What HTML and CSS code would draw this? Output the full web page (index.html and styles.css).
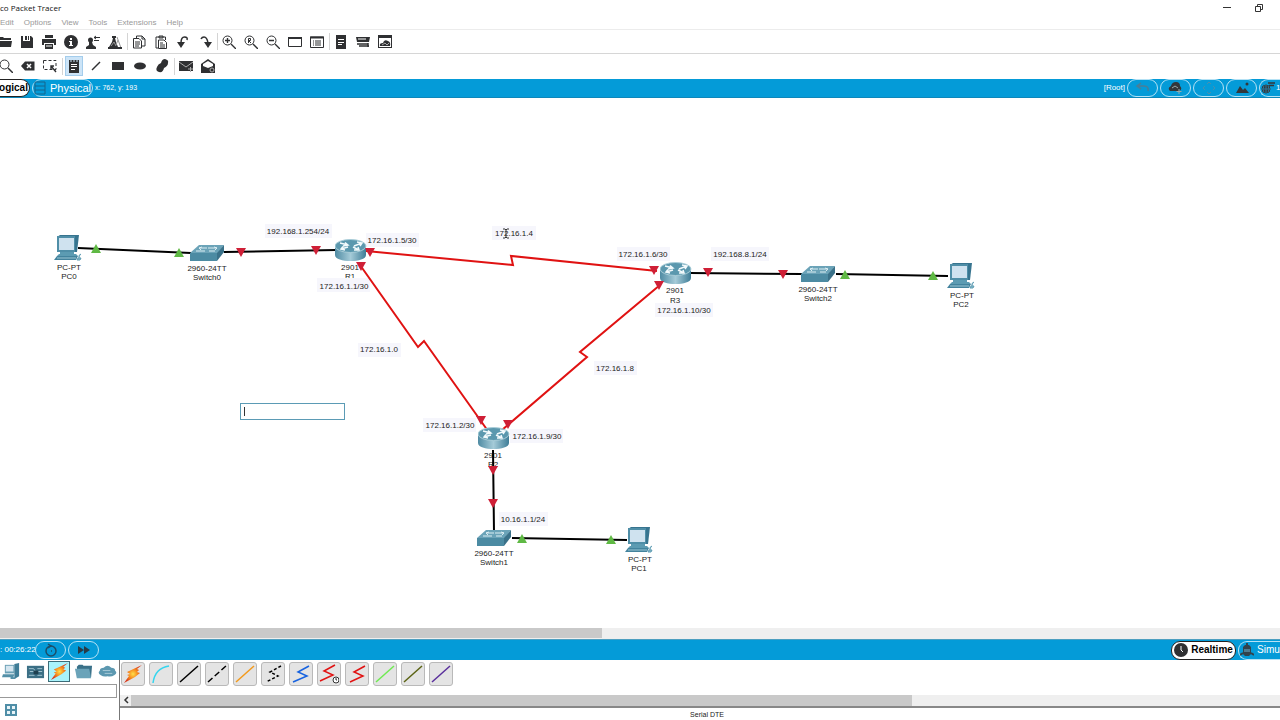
FILE: index.html
```html
<!DOCTYPE html>
<html lang="en">
<head>
  <meta charset="UTF-8">
  <title>Cisco Packet Tracer</title>
  <meta name="viewport" content="width=device-width, initial-scale=1.0">
  <link rel="stylesheet" href="styles.css">
</head>
<body>
  <header class="titlebar">
    <span>co Packet Tracer</span>
    <div class="window-btns">
      <button aria-label="Minimize"><svg width="8" height="8"><path d="M0 3.500h8" stroke="#333" fill="none"/></svg></button>
      <button aria-label="Restore"><svg width="8" height="8"><path d="M.5 2.500h5v5h-5zM2.500 2V.5h5v5H6" stroke="#333" fill="none"/></svg></button>
    </div>
  </header>

  <nav class="menubar">
    <button>Edit</button>
    <button>Options</button>
    <button>View</button>
    <button>Tools</button>
    <button>Extensions</button>
    <button>Help</button>
  </nav>

  <!-- Main toolbar -->
  <div class="toolbar toolbar-main">
    <button aria-label="Open"><svg viewBox="0 0 14 14"><path d="M0 2h5l1 1h7v2H0zM0 6h14l-1 6H0z"/></svg></button>
    <button aria-label="Save"><svg viewBox="0 0 14 14"><path d="M1 1h2v5h7V1h1l2 2v10H1zM5 1h2v4H5zM8 1h1v4H8z"/></svg></button>
    <button aria-label="Print"><svg viewBox="0 0 14 14"><path d="M3 0h8v3H3zM0 4h14v6h-2V8H2v2H0zM3 9h8v5H3z"/><path d="M4 11h6" stroke="#fff"/></svg></button>
    <button aria-label="Info"><svg viewBox="0 0 14 14"><circle cx="7" cy="7" r="7"/><path d="M6 3h2v2H6zM5 6h3v4h1v1H5v-1h1V7H5z" fill="#fff"/></svg></button>
    <button aria-label="User profile"><svg viewBox="0 0 14 14"><circle cx="4.500" cy="5" r="2.500"/><path d="M3 7h3l1 3 3 2v2H0v-2l3-2z"/><path d="M8 2.500h6M8 5.500h5M10 1L8 2.500 10 4" stroke="#2f3032" fill="none"/></svg></button>
    <button aria-label="Activity wizard"><svg viewBox="0 0 14 14"><path d="M4 1h4v2H7l1 4 2 5H1l3-5 1-4H4z"/><path d="M9 2l4 11M10 5l-2 5M3 11l3-4 2 4" stroke="#999" fill="none"/><path d="M0 13h14" stroke="#2f3032" stroke-width="2"/></svg></button>
    <i class="sep"></i>
    <button aria-label="Copy"><svg viewBox="0 0 14 14" class="line"><path d="M4.500 3V1H10l3 3v7H9M1.500 3.500H7L9.500 6v7h-8zM3 7h5M3 9h5M3 11h4M10 1v3h3"/></svg></button>
    <button aria-label="Paste"><svg viewBox="0 0 14 14" class="line"><path d="M4 13H2V2h9.500v3M5 1h4v2H5zM4.500 5H10l2.500 2.500v6h-8zM6 8h3M6 10h5M6 12h5"/></svg></button>
    <button aria-label="Undo"><svg viewBox="0 0 14 14"><path d="M5 8q0-6 3.500-6T11 5" fill="none" stroke="#2f3032" stroke-width="1.500"/><path d="M1 7h8l-4 6z"/></svg></button>
    <button aria-label="Redo"><svg viewBox="0 0 14 14"><path d="M3 4q1-2 3-2 3 0 4 6" fill="none" stroke="#2f3032" stroke-width="1.500"/><path d="M6 7h8l-4 6z"/></svg></button>
    <i class="sep"></i>
    <button aria-label="Zoom in"><svg viewBox="0 0 14 14" class="line"><circle cx="5.500" cy="5.500" r="4.500"/><path d="M9 9l5 5M3 5.500h5M5.500 3v5" stroke-width="1.400"/></svg></button>
    <button aria-label="Zoom reset"><svg viewBox="0 0 14 14" class="line"><circle cx="5.500" cy="5.500" r="4.500"/><path d="M9 9l5 5" stroke-width="1.400"/><path d="M4.500 8V3.500h2v2h-2L7 8"/></svg></button>
    <button aria-label="Zoom out"><svg viewBox="0 0 14 14" class="line"><circle cx="5.500" cy="5.500" r="4.500"/><path d="M9 9l5 5M3 5.500h5" stroke-width="1.400"/></svg></button>
    <button aria-label="Drawing palette"><svg viewBox="0 0 14 14" class="line"><path d="M.5 3h13v8.500H.5z"/><path d="M0 3h14" stroke-width="2"/></svg></button>
    <button aria-label="Custom devices"><svg viewBox="0 0 14 14" class="line"><path d="M.5 2h13v10.500H.5zM3 6h1M3 8h1M3 10h1M5 6h6M5 8h6M5 10h6"/><path d="M0 2.500h14" stroke-width="2"/></svg></button>
    <i class="sep"></i>
    <button aria-label="Notes"><svg viewBox="0 0 14 14"><path d="M2 0h10v14H2z"/><path d="M4 4.500h6M4 7.500h6M4 9.500h4" stroke="#fff"/></svg></button>
    <button aria-label="Cluster"><svg viewBox="0 0 14 14"><path d="M0 2h14l-1 5H1z"/><path d="M2 4h8" stroke="#fff"/><path d="M1 9h11M3 11h10M12 8v4" stroke="#2f3032" stroke-width="1.500"/></svg></button>
    <button aria-label="Network cloud"><svg viewBox="0 0 14 14"><path d="M0 0h14v13H0zM1 3v9h12V3z" fill-rule="evenodd"/><path d="M2 11q-1-3 3-3 1-4 5-2 3 1 2 5z"/><path d="M4 10l3-2 2 2 2-2" fill="none" stroke="#aaa"/></svg></button>
  </div>

  <!-- Drawing toolbar -->
  <div class="toolbar toolbar-draw">
    <button aria-label="Inspect"><svg viewBox="0 0 14 14" class="line"><circle cx="5.500" cy="5.500" r="4.500"/><path d="M9 9l5 5" stroke-width="1.500"/></svg></button>
    <button aria-label="Delete"><svg viewBox="0 0 14 14"><path d="M0 7l4-4.500h9.500v9H4z"/><path d="M6 5l4 4M10 5L6 9" stroke="#fff" stroke-width="1.500"/></svg></button>
    <button aria-label="Resize"><svg viewBox="0 0 14 14" class="line"><path d="M.5 1.500h12.500v9H.5z" stroke-dasharray="3 2"/><path d="M8 7l5 6M8 10V7h3" stroke-width="1.400"/></svg></button>
    <i class="sep"></i>
    <button class="active" aria-label="Place note"><svg viewBox="0 0 14 14"><path d="M2 1h10v13H2z"/><path d="M4 5.500h6M4 7.500h6M4 10.500h4" stroke="#fff"/><path d="M4 0v3M7 0v3M10 0v3" stroke="#cce4f7"/></svg></button>
    <button aria-label="Draw line"><svg viewBox="0 0 14 14"><path d="M3 11l8-8" stroke="#2f3032" stroke-width="1.500"/></svg></button>
    <button aria-label="Draw rectangle"><svg viewBox="0 0 14 14"><path d="M1 3h12v8H1z"/></svg></button>
    <button aria-label="Draw ellipse"><svg viewBox="0 0 14 14"><ellipse cx="7" cy="7" rx="6" ry="3.500"/></svg></button>
    <button aria-label="Draw freeform"><svg viewBox="0 0 14 14"><path d="M2 8q1-3 4-4 1-4 4-4 4 1 3 4 0 3-4 5-1 5-5 4-4-1-2-5z"/></svg></button>
    <i class="sep"></i>
    <button aria-label="Simple PDU"><svg viewBox="0 0 14 14"><path d="M0 2h14v10H0z"/><path d="M0 3l7 5 7-5M9 10h5M11.500 8v5" fill="none" stroke="#aaa"/></svg></button>
    <button aria-label="Complex PDU"><svg viewBox="0 0 14 14"><path d="M0 5l7-5 7 5v9H0z"/><path d="M2 5l5-3 5 3v2L7 9 2 7z" fill="#fff"/><circle cx="11" cy="11" r="2" fill="none" stroke="#aaa"/></svg></button>
  </div>

  <div class="bar bar-top">
    <button class="pill pill-on pill-cut-left">ogical</button>
    <button class="pill pill-physical"><svg width="12" height="14"><path d="M1 1h10v12H1zM1 5h10M1 9h10" fill="none" stroke="#14658c"/></svg>Physical</button>
    <span class="coords">x: 762, y: 193</span>
    <div class="bar-right">
      <span class="root">[Root]</span>
      <button class="pill" aria-label="Back"><svg width="16" height="14" fill="none" stroke="#4b7e96" stroke-width="1.500"><path d="M6 2L2 5l4 3M2 5h7q5 0 4 5"/></svg></button>
      <button class="pill" aria-label="New cluster"><svg width="16" height="14"><path d="M2 10q-3-3 1-5 1-4 5-4 4 0 4 4 3 3-1 5z" fill="#33373a"/><path d="M4 7l3-2 3 2M11 8v5M8.500 10.500h5" fill="none" stroke="#9aa"/></svg></button>
      <button class="pill" aria-label="Move object"><svg width="16" height="14" fill="none" stroke="#4b8eac"><path d="M6 3l2-2 2 2M6 11l2 2 2-2M4 5L2 7l2 2M12 5l2 2-2 2"/></svg></button>
      <button class="pill" aria-label="Set background"><svg width="16" height="14" fill="#33373a"><path d="M2 12l4-7 3 4 2-2 4 5z"/><circle cx="13" cy="3" r="1.500"/></svg></button>
      <button class="pill pill-cut-right" aria-label="Viewport"><svg width="16" height="14" fill="none" stroke="#33373a"><circle cx="6" cy="8" r="4" fill="#33373a"/><path d="M2 8h8M6 4v8M4 4.500q-2 4 0 7M8 4.500q2 4 0 7" stroke="#2a789b"/><path d="M8 2h7M9 4.500h5" stroke-width="1.400"/></svg>1</button>
    </div>
  </div>

  <main class="workspace">
    <svg class="topology">
      <defs>
        <linearGradient id="steel" x1="0" x2="1">
          <stop offset="0" stop-color="#4f8ba3"/>
          <stop offset=".5" stop-color="#a5cbd8"/>
          <stop offset="1" stop-color="#3f7d97"/>
        </linearGradient>
        <symbol id="router" width="32" height="23" viewBox="0 0 32 23">
          <path d="M0 7v9c0 8 31 8 31 0V7z" fill="url(#steel)"/>
          <ellipse cx="15.500" cy="7" rx="15.500" ry="6.500" fill="#5b98ae" stroke="#a9cdd8"/>
          <path d="M5 4l8 2M10 3.500L13 6 8 7M27 4l-8 3M22 3l5 1-2 3M13 8l-7 2M8 7.500L6 10l4 1M18 8l6 3M23 8l1 3-5 0" fill="none" stroke="#f3fafc" stroke-width="1.500"/>
        </symbol>
        <symbol id="switch" width="35" height="17" viewBox="0 0 35 17">
          <path d="M0 8L9 0h25l-7 9z" fill="#6ba3b8"/>
          <path d="M0 8h27v8H0z" fill="#4c8ba3"/>
          <path d="M27 8l7-8v7l-7 9z" fill="#3a7189"/>
          <path d="M9 3h8M12 2L9 3l2 2M18 3h9M24 2l3 1-2 2M6 6h9M19 6h6" fill="none" stroke="#dceef3"/>
        </symbol>
        <symbol id="pc" width="30" height="27" viewBox="0 0 30 27">
          <path d="M3 2l3-2h19l-2 17H4z" fill="#37748f"/>
          <path d="M3 1h18v16H3z" fill="#4f8ea7"/>
          <path d="M5 3h15v12H5z" fill="#cfe2ef"/>
          <path d="M6 17h14v3H6zM5 19h17l2 2H3z" fill="#5c9bb2"/>
          <path d="M3 21h21l-2 4H0z" fill="#43839d"/>
          <path d="M3 23h19" stroke="#9bc6d4"/>
          <path d="M25 23q-1-3 2-4M24 23h3l-1 2h-3z" fill="#8fbdcd" stroke="#5c9bb2"/>
        </symbol>
        <path id="down" d="M-5-4h10L0 5z" fill="#cf1f36"/>
        <path id="up" d="M-5 4H5L0-5z" fill="#5fb944"/>
      </defs>

      <g class="device">
        <text x="69" y="172">PC-PT</text><text x="69" y="181">PC0</text>
        <text x="207" y="173">2960-24TT</text><text x="207" y="182">Switch0</text>
        <text x="350" y="172">2901</text><text x="350" y="181">R1</text>
        <text x="675" y="195">2901</text><text x="675" y="205">R3</text>
        <text x="818" y="194">2960-24TT</text><text x="818" y="203">Switch2</text>
        <text x="962" y="200">PC-PT</text><text x="961" y="209">PC2</text>
        <text x="493" y="360">2901</text><text x="493" y="369">R2</text>
        <text x="494" y="458">2960-24TT</text><text x="494" y="467">Switch1</text>
        <text x="640" y="464">PC-PT</text><text x="639" y="473">PC1</text>
      </g>

      <g class="note-bg">
        <rect x="265" y="126" width="67" height="14"/>
        <rect x="366" y="135" width="53" height="14"/>
        <rect x="492" y="128" width="44" height="14"/>
        <rect x="317" y="180" width="53" height="14"/>
        <rect x="617" y="149" width="53" height="14"/>
        <rect x="711" y="149" width="58" height="14"/>
        <rect x="655" y="205" width="58" height="14"/>
        <rect x="358" y="245" width="43" height="14"/>
        <rect x="594" y="263" width="43" height="14"/>
        <rect x="423" y="320" width="53" height="14"/>
        <rect x="510" y="331" width="53" height="14"/>
        <rect x="499" y="414" width="49" height="14"/>
      </g>

      <g class="link">
        <path d="M78 150l113 5M224 154l112-2M690 175l112 1M836 176l112 2M512 440l115 2M493 352l1 82"/>
      </g>
      <g class="serial">
        <path d="M366 153l147 14-2-9 146 15"/>
        <path d="M360 167l58 82 6-6 64 90"/>
        <path d="M660 187l-80 67 7 5-85 73"/>
      </g>

      <use href="#pc" x="54" y="137"/>
      <use href="#switch" x="190" y="147"/>
      <use href="#router" x="335" y="141"/>
      <use href="#router" x="660" y="164"/>
      <use href="#switch" x="801" y="168"/>
      <use href="#pc" x="947" y="165"/>
      <use href="#router" x="478" y="329"/>
      <use href="#switch" x="477" y="432"/>
      <use href="#pc" x="625" y="429"/>

      <g class="note">
        <text x="298" y="136">192.168.1.254/24</text>
        <text x="392" y="145">172.16.1.5/30</text>
        <text x="514" y="138">172.16.1.4</text>
        <text x="344" y="191">172.16.1.1/30</text>
        <text x="643" y="159">172.16.1.6/30</text>
        <text x="740" y="159">192.168.8.1/24</text>
        <text x="684" y="215">172.16.1.10/30</text>
        <text x="379" y="254">172.16.1.0</text>
        <text x="615" y="273">172.16.1.8</text>
        <text x="450" y="330">172.16.1.2/30</text>
        <text x="537" y="341">172.16.1.9/30</text>
        <text x="523" y="424">10.16.1.1/24</text>
      </g>

      <!-- link status lights -->
      <use href="#up" x="96" y="151"/><use href="#up" x="179" y="155"/>
      <use href="#up" x="845" y="177"/><use href="#up" x="933" y="178"/>
      <use href="#up" x="522" y="441"/><use href="#up" x="611" y="442"/>
      <use href="#down" x="241" y="154"/><use href="#down" x="316" y="152"/>
      <use href="#down" x="370" y="154"/><use href="#down" x="361" y="168"/>
      <use href="#down" x="654" y="172"/><use href="#down" x="659" y="187"/>
      <use href="#down" x="708" y="174"/><use href="#down" x="783" y="176"/>
      <use href="#down" x="481" y="322"/><use href="#down" x="508" y="326"/>
      <use href="#down" x="493" y="372"/><use href="#down" x="493" y="405"/>

      <!-- text cursor -->
      <path d="M503 131h2l1 1 1-1h2M506 132v7M503 140h2l1-1 1 1h2" fill="none" stroke="#333"/>
    </svg>
    <input class="note-edit" type="text" aria-label="Note text">
  </main>

  <div class="scroll"><div class="thumb"></div></div>

  <div class="bar bar-bottom">
    <span class="clock">: 00:26:22</span>
    <button class="pill" aria-label="Power cycle devices"><svg width="16" height="16" fill="none" stroke="#1d4e68" stroke-width="1.500"><circle cx="8" cy="9" r="5"/><path d="M5 2l3 2-3 2M8 9h1"/></svg></button>
    <button class="pill" aria-label="Fast forward"><svg width="16" height="14" fill="#273b46"><path d="M2 3l6 4-6 4zM8 3l6 4-6 4z"/></svg></button>
    <div class="bar-right">
      <button class="pill pill-on pill-realtime"><svg width="14" height="14"><circle cx="7" cy="7" r="7" fill="#2f3032"/><path d="M7 3v4l2 2" stroke="#fff" fill="none"/></svg>Realtime</button>
      <button class="pill pill-cut-right pill-sim"><svg width="14" height="14"><path d="M3 4l2-2h4l2 2v7l-2 2H5l-2-2z" fill="#33434c"/><path d="M7 0v2M0 12l3-2M14 12l-3-2" stroke="#33434c" stroke-width="2"/><path d="M4 6h6v3H4z" fill="#507c90"/></svg>Simu</button>
    </div>
  </div>

  <footer class="palette">
    <section class="categories">
      <div class="cat-row">
        <button aria-label="Network devices"><svg viewBox="0 0 20 20"><path d="M3 3h10v9H3z" fill="#6aa0b5"/><path d="M4 4h8v6H4z" fill="#d5e6f0"/><path d="M13 2l5-1v14l-5 3z" fill="#3f7d97"/><path d="M1 13h12l-1 3H0zM9 16h5v2H9z" fill="#5490a8"/></svg></button>
        <button aria-label="Components"><svg viewBox="0 0 20 20"><path d="M1 4h18v13H1z" fill="#3b6f85"/><path d="M3 7h5l2 3h7M3 14h6M12 14h5M4 10h4M12 7h5" stroke="#a5c7d4" fill="none"/><path d="M8 9h5v4H8z" fill="#1e4050"/></svg></button>
        <button class="active" aria-label="Connections"><svg viewBox="0 0 20 20"><use href="#bolt"/></svg></button>
        <button aria-label="Miscellaneous"><svg viewBox="0 0 20 20"><path d="M3 5l2-2h4l1 1h9l-1 12H4z" fill="#3a7189"/><path d="M1 7h15l2 10H3z" fill="#6aa3b9"/></svg></button>
        <button aria-label="Multiuser connection"><svg viewBox="0 0 20 20"><path d="M3 14q-4-2-1-5 0-3 4-3 4-4 8 0 4 0 4 3 3 3-1 5-3 2-7 1-4 1-7-1z" fill="#5c98b0"/><path d="M5 9h8M7 12h8" stroke="#a9cbd8"/></svg></button>
      </div>
      <input class="search" type="text" aria-label="Search devices">
      <button class="sub" aria-label="Connections group"><svg width="12" height="12"><path d="M0 0h12v12H0z" fill="#4f8ea7"/><path d="M2 2h3v3H2zM7 2h3v3H7zM2 7h3v3H2zM7 7h3v3H7z" fill="#e8f4f8"/></svg></button>
    </section>

    <section class="cables">
      <div class="cable-row">
        <button aria-label="Automatic"><svg viewBox="0 0 20 20">
          <defs>
            <radialGradient id="fire"><stop offset="0" stop-color="#ffe04a"/><stop offset=".5" stop-color="#f78b1e"/><stop offset="1" stop-color="#d8391c"/></radialGradient>
            <path id="bolt" d="M19 1L4 8l3 2-3 1 2 1-5 7 11-6 5-4-3-1 2-2-2-1z" fill="url(#fire)"/>
          </defs>
          <use href="#bolt"/></svg></button>
        <button aria-label="Console"><svg viewBox="0 0 20 20"><path d="M2 19Q4 4 18 2" stroke="#35d5ee"/></svg></button>
        <button aria-label="Copper straight-through"><svg viewBox="0 0 20 20"><path d="M1 18L19 2" stroke="#000"/></svg></button>
        <button aria-label="Copper cross-over"><svg viewBox="0 0 20 20"><path d="M1 18L19 2" stroke="#000" stroke-dasharray="6 3"/></svg></button>
        <button aria-label="Fiber"><svg viewBox="0 0 20 20"><path d="M1 18L19 2" stroke="#f39a1c"/></svg></button>
        <button aria-label="Phone"><svg viewBox="0 0 20 20"><path d="M18 2L7 8l8 4-12 6" stroke="#000" stroke-dasharray="3 2"/></svg></button>
        <button aria-label="Coaxial"><svg viewBox="0 0 20 20"><path d="M18 2L7 8l9 4-14 6" stroke="#1763e0"/></svg></button>
        <button aria-label="Serial DCE"><svg viewBox="0 0 20 20"><path d="M16 1L5 7l9 4-13 6" stroke="#e11212"/><circle cx="17" cy="16" r="3" fill="#fff" stroke="#333" stroke-width="1"/><path d="M17 14v2h1" stroke="#333" stroke-width="1"/></svg></button>
        <button aria-label="Serial DTE"><svg viewBox="0 0 20 20"><path d="M18 2L7 8l9 4-13 6" stroke="#e11212"/></svg></button>
        <button aria-label="Octal"><svg viewBox="0 0 20 20"><path d="M1 18L19 2" stroke="#6fea52"/></svg></button>
        <button aria-label="IoT custom cable"><svg viewBox="0 0 20 20"><path d="M1 18L19 2" stroke="#5b6314"/></svg></button>
        <button aria-label="USB"><svg viewBox="0 0 20 20"><path d="M1 18L19 2" stroke="#5a2f9c"/></svg></button>
      </div>
      <div class="scroll scroll-cables">
        <button aria-label="Scroll left"><svg width="6" height="8"><path d="M5 1L2 4l3 3" fill="none" stroke="#333" stroke-width="1.500"/></svg></button>
        <div class="track"><div class="thumb"></div></div>
      </div>
      <div class="cable-name">Serial DTE</div>
    </section>
  </footer>
</body>
</html>
```
FILE: styles.css
```css
* {
  box-sizing: border-box;
}
html, body {
  height: 100%;
  margin: 0;
}
body {
  display: flex;
  flex-direction: column;
  overflow: hidden;
  background: #fff;
  color: #222;
  font-family: "Liberation Sans", Arial, sans-serif;
  font-size: 8px;
  line-height: 10px;
}
button {
  display: flex;
  align-items: center;
  justify-content: center;
  flex: none;
  margin: 0;
  padding: 0;
  border: none;
  background: none;
  color: inherit;
  font: inherit;
}
svg {
  display: block;
  flex: none;
}

/* Title and menu */
.titlebar {
  display: flex;
  align-items: center;
  justify-content: space-between;
  height: 16px;
  padding-right: 17px;
  color: #111;
  font-family: "Open Sans", sans-serif;
}
.window-btns {
  display: flex;
  gap: 24px;
}
.menubar {
  display: flex;
  align-items: center;
  gap: 10px;
  height: 14px;
  padding-top: 1px;
  border-bottom: 1px solid #ececec;
  color: #999;
}

/* Toolbars */
.toolbar {
  display: flex;
  align-items: center;
  height: 24px;
}
.toolbar-main {
  margin-left: -6px;
  border-bottom: 1px solid #d6d6d6;
}
.toolbar-draw {
  height: 25px;
  margin-left: -5px;
  padding-bottom: 1px;
}
.toolbar button {
  width: 22px;
  height: 20px;
}
.toolbar svg {
  width: 14px;
  height: 14px;
  fill: #2f3032;
}
.toolbar .line {
  fill: none;
  stroke: #2f3032;
}
.toolbar .active svg {
  width: 16px;
  height: 18px;
  padding: 2px 1px;
  background: #cce4f7;
  outline: 1px solid #a4cdec;
}
.sep {
  width: 2px;
  height: 17px;
  border-right: 1px solid #d4d4d4;
}

/* Blue bars */
.bar {
  display: flex;
  align-items: center;
  gap: 2px;
  background: #049bd8;
  color: #fff;
}
.bar-top {
  height: 19px;
  border-bottom: 1px solid #0d87ba;
}
.bar-bottom {
  height: 21px;
  border-top: 1px solid #4d9fc0;
}
.bar-right {
  display: flex;
  align-items: center;
  gap: 2px;
  margin-left: auto;
}
.pill {
  width: 31px;
  height: 18px;
  border: 1px solid #b5e2f5;
  border-radius: 9px;
}
.pill-on {
  border-color: #222;
  background: #fff;
  color: #000;
  font-size: 10px;
  font-weight: bold;
}
.pill-cut-left {
  width: 30px;
  padding-right: 2px;
  border-left: none;
  border-radius: 0 9px 9px 0;
}
.pill-cut-right {
  justify-content: flex-start;
  width: 21px;
  border-right: none;
  border-radius: 9px 0 0 9px;
}
.pill-physical {
  gap: 4px;
  width: 61px;
  font-size: 11px;
}
.pill-realtime {
  gap: 3px;
  width: 65px;
  height: 19px;
}
.pill-sim {
  gap: 3px;
  width: 42px;
  height: 19px;
  padding-left: 1px;
  font-size: 10px;
}
.coords {
  font-size: 7px;
}
.clock {
  width: 33px;
  white-space: nowrap;
}

/* Workspace */
.workspace {
  position: relative;
  flex: 1;
  min-height: 0;
  overflow: hidden;
}
.topology {
  width: 100%;
  height: 100%;
}
.link {
  fill: none;
  stroke: #000;
  stroke-width: 2;
}
.serial {
  fill: none;
  stroke: #e01212;
  stroke-width: 2;
}
.device text, .note text {
  fill: #222;
  text-anchor: middle;
}
.note-bg {
  fill: #f6f6fc;
}
.note-edit {
  position: absolute;
  left: 240px;
  top: 305px;
  width: 105px;
  height: 17px;
  padding: 0 3px;
  border: 1px solid #5b9bb5;
  background: linear-gradient(#333, #333) 3px 3px / 1px 9px no-repeat #fff;
  font: inherit;
}

.scroll {
  height: 11px;
  background: #efefef;
}
.thumb {
  width: 47%;
  height: 10px;
  background: #c9c9c9;
}

/* Device palette */
.palette {
  display: flex;
  height: 60px;
}
.categories {
  width: 119px;
}
.cat-row {
  display: flex;
  gap: 2px;
  padding-top: 1px;
}
.cat-row button {
  width: 22px;
  height: 21px;
}
.cat-row svg {
  width: 19px;
  height: 19px;
}
.cat-row .active {
  border: 1px solid #3d6c78;
  background: #a9f3fb;
}
.search {
  display: block;
  width: 117px;
  height: 14px;
  margin-top: 2px;
  border: 1px solid #999;
  border-left: none;
}
.sub {
  margin: 6px 0 0 5px;
}
.cables {
  display: flex;
  flex: 1;
  flex-direction: column;
  min-width: 0;
  border-left: 1px solid #777;
}
.cable-row {
  display: flex;
  gap: 4px;
  height: 37px;
  padding: 2px 1px;
}
.cable-row button {
  width: 24px;
  height: 24px;
  border: 1px solid #b9b9b9;
  border-radius: 3px;
  background: #e4e4e4;
}
.cable-row svg {
  width: 20px;
  height: 20px;
  fill: none;
  stroke-width: 1.5px;
}
.scroll-cables {
  display: flex;
  height: 12px;
}
.scroll-cables button {
  width: 11px;
}
.track {
  flex: 1;
}
.track .thumb {
  width: 68%;
  height: 11px;
}
.cable-name {
  flex: 1;
  padding: 2px 0 0 14px;
  border-top: 2px solid #888;
  font-size: 7px;
  text-align: center;
}
```
